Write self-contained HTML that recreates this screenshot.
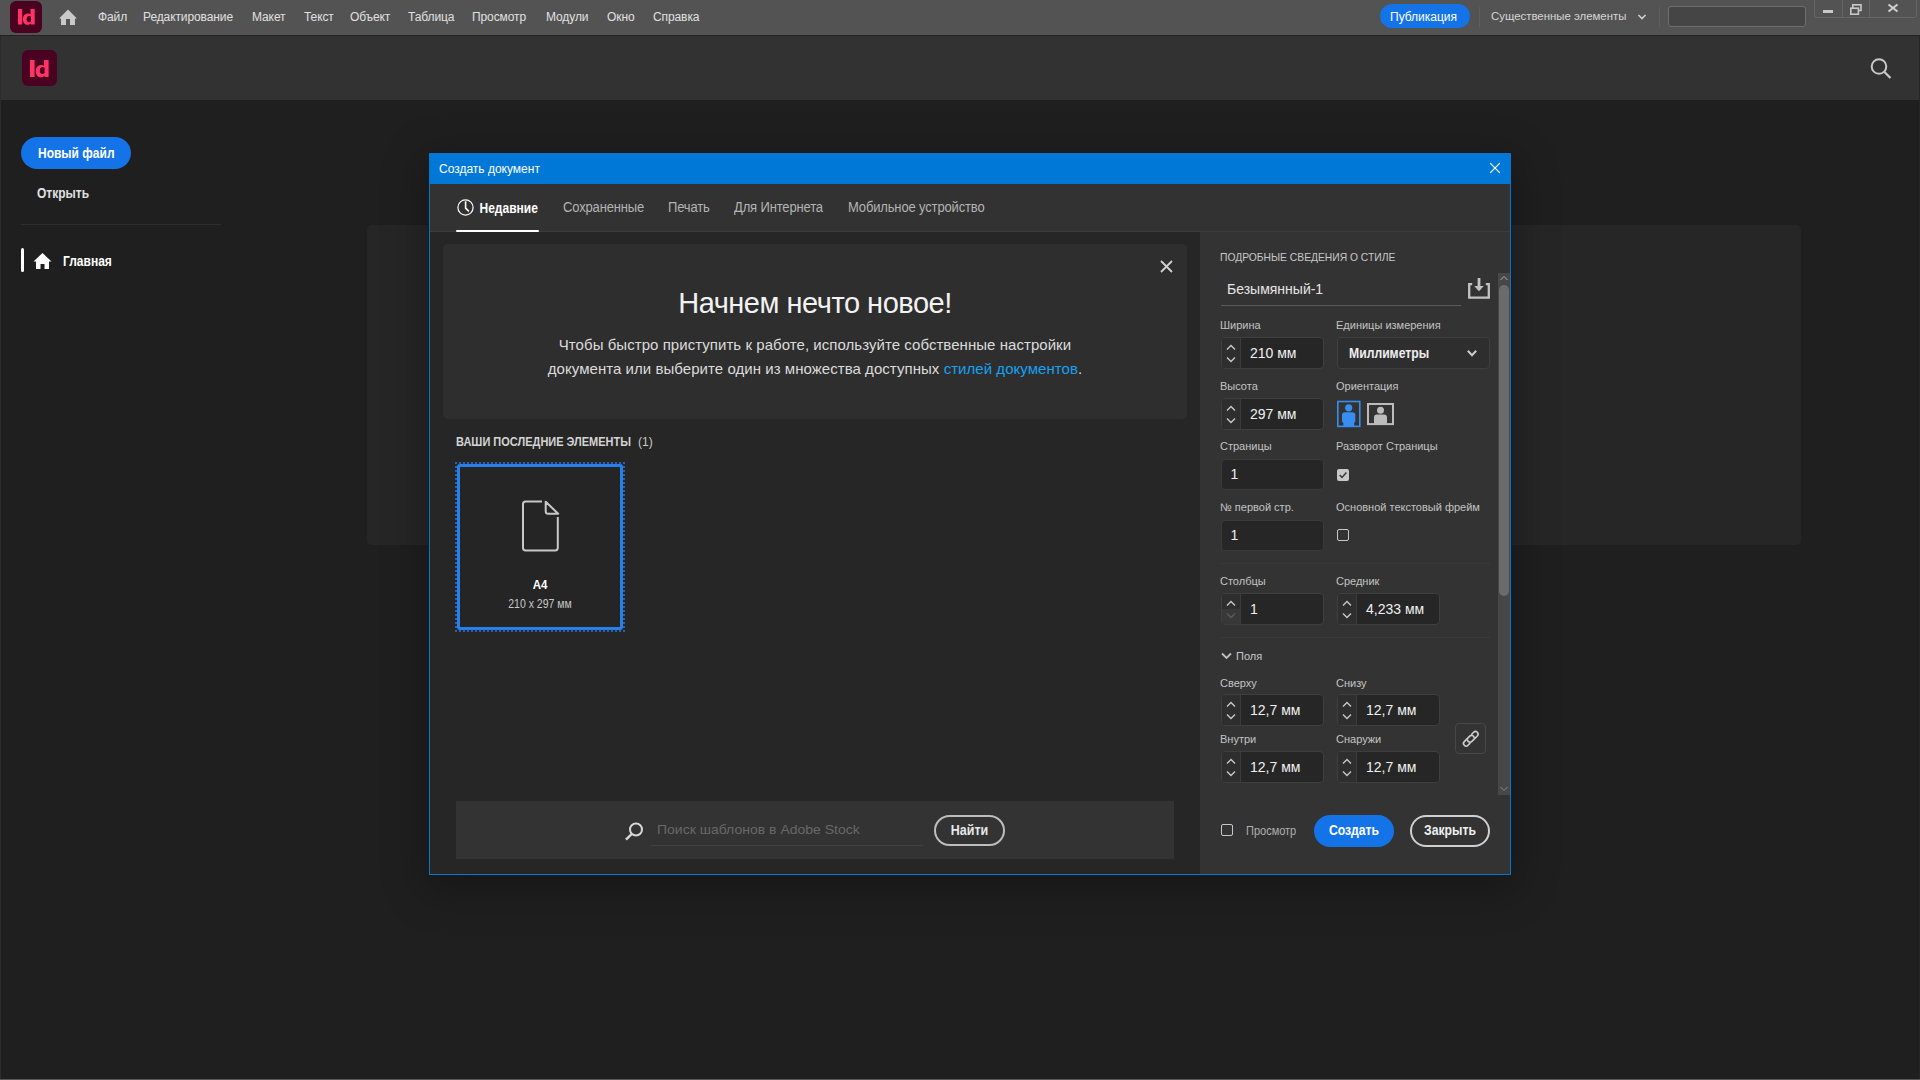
<!DOCTYPE html>
<html><head><meta charset="utf-8"><title>InDesign</title>
<style>
html,body{margin:0;padding:0;}
body{width:1920px;height:1080px;overflow:hidden;position:relative;background:#1f1f1f;font-family:"Liberation Sans", sans-serif;}
.a{position:absolute;display:block;}
.t{position:absolute;white-space:nowrap;line-height:20px;height:20px;}
</style></head><body>
<div class="a" style="left:0px;top:0px;width:1920px;height:35px;background:#535353;"></div>
<div class="a" style="left:0px;top:35px;width:1920px;height:1px;background:#232323;"></div>
<svg class="a" style="left:10px;top:1px;" width="32" height="32" viewBox="0 0 32 32"><rect x="0" y="0" width="32" height="32" rx="6" fill="#49021f"/><rect x="8" y="8" width="4.2" height="15.5" fill="#ff3366"/><path d="M20.5 8 h4.2 v15.5 h-3.7 l-0.2-1.2 c-0.8 1 -1.9 1.5 -3.2 1.5 c-2.9 0 -4.7 -2.3 -4.7 -5.6 c0 -3.4 2 -5.8 5 -5.8 c1.1 0 2 0.3 2.6 0.8 z M21 15.6 c-0.5-0.5 -1.1 -0.7 -1.9 -0.7 c-1.5 0 -2.5 1.2 -2.5 3.3 c0 2 0.9 3.1 2.3 3.1 c0.8 0 1.5 -0.3 2.1 -0.9 z" fill="#ff3366"/></svg>
<svg class="a" style="left:58px;top:9px;" width="20" height="17" viewBox="0 0 20 17"><path d="M10 0.5 L19 9.5 L17 9.5 L17 16 L12 16 L12 10 L8 10 L8 16 L3 16 L3 9.5 L1 9.5 Z" fill="#c9c9c9"/></svg>
<div class="t" style="left:98px;top:6.84px;font-size:12px;color:#e0e0e0;letter-spacing:-0.1px;">Файл</div>
<div class="t" style="left:143px;top:6.84px;font-size:12px;color:#e0e0e0;letter-spacing:-0.1px;">Редактирование</div>
<div class="t" style="left:252px;top:6.84px;font-size:12px;color:#e0e0e0;letter-spacing:-0.1px;">Макет</div>
<div class="t" style="left:304px;top:6.84px;font-size:12px;color:#e0e0e0;letter-spacing:-0.1px;">Текст</div>
<div class="t" style="left:350px;top:6.84px;font-size:12px;color:#e0e0e0;letter-spacing:-0.1px;">Объект</div>
<div class="t" style="left:408px;top:6.84px;font-size:12px;color:#e0e0e0;letter-spacing:-0.1px;">Таблица</div>
<div class="t" style="left:472px;top:6.84px;font-size:12px;color:#e0e0e0;letter-spacing:-0.1px;">Просмотр</div>
<div class="t" style="left:546px;top:6.84px;font-size:12px;color:#e0e0e0;letter-spacing:-0.1px;">Модули</div>
<div class="t" style="left:607px;top:6.84px;font-size:12px;color:#e0e0e0;letter-spacing:-0.1px;">Окно</div>
<div class="t" style="left:653px;top:6.84px;font-size:12px;color:#e0e0e0;letter-spacing:-0.1px;">Справка</div>
<div class="a" style="left:1380px;top:4px;width:90px;height:24px;background:#1473e6;border-radius:12px;"></div>
<div class="t" style="left:1390px;top:6.84px;font-size:12px;color:#ffffff;">Публикация</div>
<div class="a" style="left:1479px;top:7px;width:1px;height:20px;background:#5e5e5e;"></div>
<div class="t" style="left:1491px;top:6.35px;font-size:11.4px;color:#d6d6d6;">Существенные элементы</div>
<svg class="a" style="left:1637px;top:13px;" width="10" height="8" viewBox="0 0 10 8"><path d="M1.5 2 L5 5.5 L8.5 2" stroke="#d0d0d0" stroke-width="1.6" fill="none"/></svg>
<div class="a" style="left:1659px;top:7px;width:1px;height:20px;background:#5e5e5e;"></div>
<div class="a" style="left:1668px;top:6px;width:138px;height:21px;background:#454545;border:1px solid #6e6e6e;border-radius:3px;box-sizing:border-box;"></div>
<div class="a" style="left:1814px;top:-3px;width:103px;height:21px;background:transparent;border:1px solid #666;border-radius:3px;box-sizing:border-box;"></div>
<div class="a" style="left:1842px;top:0px;width:1px;height:17px;background:#666;"></div>
<div class="a" style="left:1869px;top:0px;width:1px;height:17px;background:#666;"></div>
<div class="a" style="left:1823px;top:10px;width:10px;height:3px;background:#c8c8c8;"></div>
<svg class="a" style="left:1849px;top:3px;" width="14" height="12" viewBox="0 0 14 12"><rect x="3.8" y="1.8" width="8.2" height="5.6" stroke="#c8c8c8" stroke-width="1.6" fill="none"/><rect x="1.8" y="5.2" width="7.6" height="6" stroke="#c8c8c8" stroke-width="1.6" fill="#535353"/></svg>
<svg class="a" style="left:1887px;top:3px;" width="12" height="10" viewBox="0 0 12 10"><path d="M1.5 1.5 L10.5 8.5 M10.5 1.5 L1.5 8.5" stroke="#d0d0d0" stroke-width="2"/></svg>
<div class="a" style="left:0px;top:36px;width:1920px;height:64px;background:#323232;"></div>
<svg class="a" style="left:22px;top:50px;" width="35" height="36" viewBox="0 0 35 36"><rect x="0" y="0" width="35" height="36" rx="6" fill="#49021f"/><rect x="8" y="10" width="4.6" height="17" fill="#ff3366"/><path d="M22 10 h4.6 v17 h-4 l-0.25-1.3 c-0.9 1.1 -2.1 1.6 -3.5 1.6 c-3.2 0 -5.1 -2.5 -5.1 -6.1 c0 -3.7 2.2 -6.3 5.5 -6.3 c1.2 0 2.2 0.3 2.8 0.9 z M22.6 17.7 c-0.6-0.55 -1.2 -0.8 -2.1 -0.8 c-1.6 0 -2.7 1.3 -2.7 3.6 c0 2.2 1 3.4 2.5 3.4 c0.9 0 1.65 -0.35 2.3 -1 z" fill="#ff3366"/></svg>
<svg class="a" style="left:1869px;top:57px;" width="24" height="24" viewBox="0 0 24 24"><circle cx="10" cy="9.5" r="7.3" stroke="#c8c8c8" stroke-width="2" fill="none"/><path d="M15.2 14.7 L21.5 21" stroke="#c8c8c8" stroke-width="2.2"/></svg>
<div class="a" style="left:0px;top:36px;width:1px;height:1044px;background:#2b2b2b;"></div>
<div class="a" style="left:1919px;top:36px;width:1px;height:1044px;background:#262626;"></div>
<div class="a" style="left:0px;top:1079px;width:1920px;height:1px;background:#585858;"></div>
<div class="a" style="left:21px;top:137px;width:110px;height:32px;background:#1473e6;border-radius:16px;"></div>
<div class="t" style="left:38px;top:143.84px;font-size:12px;color:#ffffff;font-weight:bold;transform:scaleY(1.24);transform-origin:50% 14.16px;">Новый файл</div>
<div class="t" style="left:37px;top:183.84px;font-size:12px;color:#e0e0e0;font-weight:bold;transform:scaleY(1.2);transform-origin:50% 14.16px;">Открыть</div>
<div class="a" style="left:21px;top:224px;width:200px;height:1px;background:#2e2e2e;"></div>
<div class="a" style="left:21px;top:248px;width:3px;height:24px;background:#ffffff;border-radius:2px;"></div>
<svg class="a" style="left:33px;top:252px;" width="19" height="18" viewBox="0 0 19 18"><path d="M9.5 1 L18.5 9.5 L16 9.5 L16 17 L11.5 17 L11.5 12 L7.5 12 L7.5 17 L3 17 L3 9.5 L0.5 9.5 Z" fill="#ffffff"/></svg>
<div class="t" style="left:63px;top:251.84px;font-size:12px;color:#ffffff;font-weight:bold;transform:scaleY(1.24);transform-origin:50% 14.16px;">Главная</div>
<div class="a" style="left:367px;top:225px;width:1434px;height:320px;background:#262626;border-radius:5px;"></div>
<div class="a" style="left:428px;top:152px;width:1084px;height:724px;background:#1a1612;box-shadow:0 10px 40px 4px rgba(0,0,0,0.28);"></div>
<div class="a" style="left:429px;top:153px;width:1082px;height:722px;background:#0078d7;"></div>
<div class="a" style="left:430px;top:184px;width:1080px;height:690px;background:#262626;"></div>
<div class="a" style="left:430px;top:184px;width:1080px;height:47px;background:#323232;"></div>
<div class="a" style="left:430px;top:231px;width:1080px;height:1px;background:#3d3d3d;"></div>
<div class="t" style="left:439px;top:158.84px;font-size:12px;color:#ffffff;">Создать документ</div>
<svg class="a" style="left:1489px;top:162px;" width="12" height="12" viewBox="0 0 12 12"><path d="M1.2 1.2 L10.8 10.8 M10.8 1.2 L1.2 10.8" stroke="#ffffff" stroke-width="1.15"/></svg>
<svg class="a" style="left:457px;top:199px;" width="17" height="17" viewBox="0 0 17 17"><circle cx="8.5" cy="8.5" r="7.6" stroke="#ffffff" stroke-width="1.2" fill="none"/><path d="M8.6 2.2 L8.6 9.2 L11.9 12.3" stroke="#ffffff" stroke-width="1.6" fill="none"/></svg>
<div class="t" style="left:479.5px;top:198.84px;font-size:12px;color:#ffffff;font-weight:bold;transform:scaleY(1.25);transform-origin:50% 14.16px;">Недавние</div>
<div class="a" style="left:456px;top:230px;width:83px;height:2px;background:#ffffff;border-radius:1px;"></div>
<div class="t" style="left:563px;top:198.49px;font-size:13px;color:#b4b4b4;letter-spacing:-0.15px;transform:scaleY(1.18);transform-origin:50% 14.51px;">Сохраненные</div>
<div class="t" style="left:668px;top:198.49px;font-size:13px;color:#b4b4b4;letter-spacing:-0.15px;transform:scaleY(1.18);transform-origin:50% 14.51px;">Печать</div>
<div class="t" style="left:734px;top:198.49px;font-size:13px;color:#b4b4b4;letter-spacing:-0.15px;transform:scaleY(1.18);transform-origin:50% 14.51px;">Для Интернета</div>
<div class="t" style="left:848px;top:198.49px;font-size:13px;color:#b4b4b4;letter-spacing:-0.15px;transform:scaleY(1.18);transform-origin:50% 14.51px;">Мобильное устройство</div>
<div class="a" style="left:443px;top:244px;width:744px;height:175px;background:#2e2e2e;border-radius:5px;"></div>
<svg class="a" style="left:1160px;top:260px;" width="13" height="13" viewBox="0 0 13 13"><path d="M1 1 L12 12 M12 1 L1 12" stroke="#d0d0d0" stroke-width="1.8"/></svg>
<div class="t" style="left:315.00px;width:1000px;text-align:center;top:293.15px;font-size:29px;color:#f2f2f2;letter-spacing:-0.48px;">Начнем нечто новое!</div>
<div class="t" style="left:315.00px;width:1000px;text-align:center;top:334.80px;font-size:15px;color:#dcdcdc;letter-spacing:0.05px;">Чтобы быстро приступить к работе, используйте собственные настройки</div>
<div class="t" style="left:315.00px;width:1000px;text-align:center;top:358.80px;font-size:15px;color:#dcdcdc;letter-spacing:0.05px;">документа или выберите один из множества доступных <span style="color:#17a0f2">стилей документов</span>.</div>
<div class="t" style="left:456px;top:432.19px;font-size:11px;color:#d4d4d4;font-weight:bold;transform:scaleY(1.15);transform-origin:50% 13.81px;">ВАШИ ПОСЛЕДНИЕ ЭЛЕМЕНТЫ</div>
<div class="t" style="left:638px;top:431.84px;font-size:12px;color:#c8c8c8;">(1)</div>
<div class="a" style="left:455px;top:462px;width:170px;height:170px;background:transparent;border:2px dotted #2b62b0;box-sizing:border-box;"></div>
<div class="a" style="left:457px;top:464px;width:166px;height:166px;background:#252525;border:3px solid #2680eb;border-radius:3px;box-sizing:border-box;"></div>
<svg class="a" style="left:521px;top:499px;" width="40" height="55" viewBox="0 0 40 55"><g stroke="#c8c8c8" stroke-width="2" fill="none" stroke-linejoin="round"><path d="M21 2.6 H4.6 Q2 2.6 2 5.2 V48.8 Q2 51.4 4.6 51.4 H34.2 Q36.8 51.4 36.8 48.8 V18.1"/><path d="M24.7 2.8 V12.2 Q24.7 14.7 27.2 14.7 H37.2 Z"/></g></svg>
<div class="t" style="left:460.00px;width:160px;text-align:center;top:575.31px;font-size:11.5px;color:#ffffff;font-weight:bold;transform:scaleY(1.12);transform-origin:50% 13.99px;">A4</div>
<div class="t" style="left:460.00px;width:160px;text-align:center;top:593.66px;font-size:10.5px;color:#c8c8c8;transform:scaleY(1.2);transform-origin:50% 13.64px;">210 x 297 мм</div>
<div class="a" style="left:456px;top:801px;width:718px;height:58px;background:#333333;"></div>
<svg class="a" style="left:624px;top:821px;" width="21" height="21" viewBox="0 0 21 21"><circle cx="12" cy="8.5" r="6" stroke="#d8d8d8" stroke-width="2" fill="none"/><path d="M7.8 12.8 L2 18.6" stroke="#d8d8d8" stroke-width="2.4"/></svg>
<div class="t" style="left:657px;top:819.15px;font-size:14px;color:#686868;transform:scaleY(0.97);transform-origin:50% 14.85px;">Поиск шаблонов в Adobe Stock</div>
<div class="a" style="left:651px;top:845px;width:272px;height:1px;background:#404040;"></div>
<div class="a" style="left:934px;top:815px;width:71px;height:31px;background:transparent;border:2px solid #bdbdbd;border-radius:16px;box-sizing:border-box;"></div>
<div class="t" style="left:934.50px;width:70px;text-align:center;top:820.67px;font-size:12.5px;color:#e8e8e8;font-weight:bold;transform:scaleY(1.18);transform-origin:50% 14.33px;">Найти</div>
<div class="a" style="left:1200px;top:232px;width:310px;height:642px;background:#333333;"></div>
<div class="t" style="left:1220px;top:248.43px;font-size:10.3px;color:#c8c8c8;">ПОДРОБНЫЕ СВЕДЕНИЯ О СТИЛЕ</div>
<div class="t" style="left:1227px;top:279.15px;font-size:14px;color:#e6e6e6;">Безымянный-1</div>
<div class="a" style="left:1221px;top:305px;width:240px;height:1px;background:#5a5a5a;"></div>
<svg class="a" style="left:1467px;top:276px;" width="24" height="24" viewBox="0 0 24 24"><path d="M5.2 8.2 H2.2 V21.6 H21.8 V8.2 H18.8" stroke="#c2c2c2" stroke-width="2.3" fill="none"/><path d="M12 2 V14" stroke="#c2c2c2" stroke-width="2.8"/><path d="M7.2 10 L12 15.3 L16.8 10 Z" fill="#c2c2c2"/></svg>
<div class="a" style="left:1498px;top:273px;width:12px;height:522px;background:#474747;"></div>
<div class="a" style="left:1499px;top:285px;width:10px;height:311px;background:#6b6b6b;border-radius:5px;"></div>
<svg class="a" style="left:1499px;top:275px;" width="10" height="7" viewBox="0 0 10 7"><path d="M1.5 5 L5 1.5 L8.5 5" stroke="#aaaaaa" stroke-width="1" fill="none"/></svg>
<svg class="a" style="left:1499px;top:785px;" width="10" height="7" viewBox="0 0 10 7"><path d="M1.5 2 L5 5.5 L8.5 2" stroke="#8a8a8a" stroke-width="1" fill="none"/></svg>
<div class="t" style="left:1220px;top:315.19px;font-size:11px;color:#c3c3c3;">Ширина</div>
<div class="t" style="left:1336px;top:315.19px;font-size:11px;color:#c3c3c3;">Единицы измерения</div>
<div class="a" style="left:1221px;top:337px;width:103px;height:32px;background:#262626;border:1px solid #3f3f3f;border-radius:4px;box-sizing:border-box;"></div>
<div class="a" style="left:1222px;top:338px;width:19px;height:30px;background:#2e2e2e;border-radius:3px 0 0 3px;"></div>
<div class="a" style="left:1240px;top:338px;width:1px;height:30px;background:#3c3c3c;"></div>
<svg class="a" style="left:1226px;top:344px;" width="10" height="7" viewBox="0 0 10 7"><path d="M1 5.5 L5 1.5 L9 5.5" stroke="#c8c8c8" stroke-width="1.4" fill="none"/></svg>
<svg class="a" style="left:1226px;top:356px;" width="10" height="7" viewBox="0 0 10 7"><path d="M1 1.5 L5 5.5 L9 1.5" stroke="#c8c8c8" stroke-width="1.4" fill="none"/></svg>
<div class="t" style="left:1250px;top:343.15px;font-size:14px;color:#f0f0f0;">210 мм</div>
<div class="a" style="left:1337px;top:337px;width:153px;height:32px;background:#2e2e2e;border:1px solid #3f3f3f;border-radius:4px;box-sizing:border-box;"></div>
<div class="t" style="left:1349px;top:344.47px;font-size:12.2px;color:#eeeeee;font-weight:bold;transform:scaleY(1.22);transform-origin:50% 14.23px;">Миллиметры</div>
<svg class="a" style="left:1466px;top:349px;" width="12" height="9" viewBox="0 0 12 9"><path d="M1.8 1.8 L6 6.2 L10.2 1.8" stroke="#cccccc" stroke-width="2" fill="none"/></svg>
<div class="t" style="left:1220px;top:376.19px;font-size:11px;color:#c3c3c3;">Высота</div>
<div class="t" style="left:1336px;top:376.19px;font-size:11px;color:#c3c3c3;">Ориентация</div>
<div class="a" style="left:1221px;top:398px;width:103px;height:32px;background:#262626;border:1px solid #3f3f3f;border-radius:4px;box-sizing:border-box;"></div>
<div class="a" style="left:1222px;top:399px;width:19px;height:30px;background:#2e2e2e;border-radius:3px 0 0 3px;"></div>
<div class="a" style="left:1240px;top:399px;width:1px;height:30px;background:#3c3c3c;"></div>
<svg class="a" style="left:1226px;top:405px;" width="10" height="7" viewBox="0 0 10 7"><path d="M1 5.5 L5 1.5 L9 5.5" stroke="#c8c8c8" stroke-width="1.4" fill="none"/></svg>
<svg class="a" style="left:1226px;top:417px;" width="10" height="7" viewBox="0 0 10 7"><path d="M1 1.5 L5 5.5 L9 1.5" stroke="#c8c8c8" stroke-width="1.4" fill="none"/></svg>
<div class="t" style="left:1250px;top:404.15px;font-size:14px;color:#f0f0f0;">297 мм</div>
<svg class="a" style="left:1337px;top:400px;" width="24" height="28" viewBox="0 0 24 28"><rect x="0.8" y="1.5" width="22" height="24.9" stroke="#378ef0" stroke-width="1.6" fill="none"/><circle cx="11.7" cy="7.8" r="3.6" fill="#378ef0"/><path d="M5 15 Q5 12.2 8 12.2 H15.3 Q18.3 12.2 18.3 15 V22 L17.2 22.5 V26 H6.3 V22.5 L5 22 Z" fill="#378ef0"/></svg>
<svg class="a" style="left:1367px;top:403px;" width="28" height="23" viewBox="0 0 28 23"><rect x="1" y="1" width="25" height="20.1" stroke="#bcbcbc" stroke-width="2" fill="none"/><circle cx="13.5" cy="7.2" r="3.5" fill="#bcbcbc"/><path d="M7 14.6 Q7 11.6 10 11.6 H17 Q20 11.6 20 14.6 V21 H7 Z" fill="#bcbcbc"/></svg>
<div class="t" style="left:1220px;top:436.19px;font-size:11px;color:#c3c3c3;">Страницы</div>
<div class="t" style="left:1336px;top:436.19px;font-size:11px;color:#c3c3c3;">Разворот Страницы</div>
<div class="a" style="left:1221px;top:459px;width:103px;height:31px;background:#262626;border:1px solid #3a3a3a;border-radius:4px;box-sizing:border-box;"></div>
<div class="t" style="left:1230.5px;top:464.15px;font-size:14px;color:#f0f0f0;">1</div>
<div class="a" style="left:1337px;top:469px;width:12px;height:12px;background:#c8c8c8;border-radius:2px;"></div>
<svg class="a" style="left:1337px;top:469px;" width="12" height="12" viewBox="0 0 12 12"><path d="M2.6 6 L5 8.4 L9.4 3.4" stroke="#3c3c3c" stroke-width="1.5" fill="none"/></svg>
<div class="t" style="left:1220px;top:497.19px;font-size:11px;color:#c3c3c3;">№ первой стр.</div>
<div class="t" style="left:1336px;top:497.19px;font-size:11px;color:#c3c3c3;">Основной текстовый фрейм</div>
<div class="a" style="left:1221px;top:520px;width:103px;height:31px;background:#262626;border:1px solid #3a3a3a;border-radius:4px;box-sizing:border-box;"></div>
<div class="t" style="left:1230.5px;top:525.15px;font-size:14px;color:#f0f0f0;">1</div>
<div class="a" style="left:1337px;top:529px;width:12px;height:12px;background:transparent;border:1.5px solid #c8c8c8;border-radius:2px;box-sizing:border-box;"></div>
<div class="a" style="left:1221px;top:563px;width:269px;height:1px;background:#3a3a3a;"></div>
<div class="t" style="left:1220px;top:571.19px;font-size:11px;color:#c3c3c3;">Столбцы</div>
<div class="t" style="left:1336px;top:571.19px;font-size:11px;color:#c3c3c3;">Средник</div>
<div class="a" style="left:1221px;top:593px;width:103px;height:32px;background:#262626;border:1px solid #3f3f3f;border-radius:4px;box-sizing:border-box;"></div>
<div class="a" style="left:1222px;top:594px;width:19px;height:30px;background:#2e2e2e;border-radius:3px 0 0 3px;"></div>
<div class="a" style="left:1222px;top:609px;width:19px;height:15px;background:#383838;border-radius:0 0 0 3px;"></div>
<div class="a" style="left:1240px;top:594px;width:1px;height:30px;background:#3c3c3c;"></div>
<svg class="a" style="left:1226px;top:600px;" width="10" height="7" viewBox="0 0 10 7"><path d="M1 5.5 L5 1.5 L9 5.5" stroke="#c8c8c8" stroke-width="1.4" fill="none"/></svg>
<svg class="a" style="left:1226px;top:612px;" width="10" height="7" viewBox="0 0 10 7"><path d="M1 1.5 L5 5.5 L9 1.5" stroke="#5a5a5a" stroke-width="1.4" fill="none"/></svg>
<div class="t" style="left:1250px;top:599.15px;font-size:14px;color:#f0f0f0;">1</div>
<div class="a" style="left:1337px;top:593px;width:103px;height:32px;background:#262626;border:1px solid #3f3f3f;border-radius:4px;box-sizing:border-box;"></div>
<div class="a" style="left:1338px;top:594px;width:19px;height:30px;background:#2e2e2e;border-radius:3px 0 0 3px;"></div>
<div class="a" style="left:1356px;top:594px;width:1px;height:30px;background:#3c3c3c;"></div>
<svg class="a" style="left:1342px;top:600px;" width="10" height="7" viewBox="0 0 10 7"><path d="M1 5.5 L5 1.5 L9 5.5" stroke="#c8c8c8" stroke-width="1.4" fill="none"/></svg>
<svg class="a" style="left:1342px;top:612px;" width="10" height="7" viewBox="0 0 10 7"><path d="M1 1.5 L5 5.5 L9 1.5" stroke="#c8c8c8" stroke-width="1.4" fill="none"/></svg>
<div class="t" style="left:1366px;top:599.15px;font-size:14px;color:#f0f0f0;">4,233 мм</div>
<div class="a" style="left:1221px;top:637px;width:269px;height:1px;background:#3a3a3a;"></div>
<svg class="a" style="left:1221px;top:652px;" width="11" height="8" viewBox="0 0 11 8"><path d="M1 1.5 L5.5 6 L10 1.5" stroke="#bfbfbf" stroke-width="1.8" fill="none"/></svg>
<div class="t" style="left:1236px;top:646.19px;font-size:11px;color:#c8c8c8;">Поля</div>
<div class="t" style="left:1220px;top:673.19px;font-size:11px;color:#c3c3c3;">Сверху</div>
<div class="t" style="left:1336px;top:673.19px;font-size:11px;color:#c3c3c3;">Снизу</div>
<div class="a" style="left:1221px;top:694px;width:103px;height:32px;background:#262626;border:1px solid #3f3f3f;border-radius:4px;box-sizing:border-box;"></div>
<div class="a" style="left:1222px;top:695px;width:19px;height:30px;background:#2e2e2e;border-radius:3px 0 0 3px;"></div>
<div class="a" style="left:1240px;top:695px;width:1px;height:30px;background:#3c3c3c;"></div>
<svg class="a" style="left:1226px;top:701px;" width="10" height="7" viewBox="0 0 10 7"><path d="M1 5.5 L5 1.5 L9 5.5" stroke="#c8c8c8" stroke-width="1.4" fill="none"/></svg>
<svg class="a" style="left:1226px;top:713px;" width="10" height="7" viewBox="0 0 10 7"><path d="M1 1.5 L5 5.5 L9 1.5" stroke="#c8c8c8" stroke-width="1.4" fill="none"/></svg>
<div class="t" style="left:1250px;top:700.15px;font-size:14px;color:#f0f0f0;">12,7 мм</div>
<div class="a" style="left:1337px;top:694px;width:103px;height:32px;background:#262626;border:1px solid #3f3f3f;border-radius:4px;box-sizing:border-box;"></div>
<div class="a" style="left:1338px;top:695px;width:19px;height:30px;background:#2e2e2e;border-radius:3px 0 0 3px;"></div>
<div class="a" style="left:1356px;top:695px;width:1px;height:30px;background:#3c3c3c;"></div>
<svg class="a" style="left:1342px;top:701px;" width="10" height="7" viewBox="0 0 10 7"><path d="M1 5.5 L5 1.5 L9 5.5" stroke="#c8c8c8" stroke-width="1.4" fill="none"/></svg>
<svg class="a" style="left:1342px;top:713px;" width="10" height="7" viewBox="0 0 10 7"><path d="M1 1.5 L5 5.5 L9 1.5" stroke="#c8c8c8" stroke-width="1.4" fill="none"/></svg>
<div class="t" style="left:1366px;top:700.15px;font-size:14px;color:#f0f0f0;">12,7 мм</div>
<div class="t" style="left:1220px;top:729.19px;font-size:11px;color:#c3c3c3;">Внутри</div>
<div class="t" style="left:1336px;top:729.19px;font-size:11px;color:#c3c3c3;">Снаружи</div>
<div class="a" style="left:1221px;top:751px;width:103px;height:32px;background:#262626;border:1px solid #3f3f3f;border-radius:4px;box-sizing:border-box;"></div>
<div class="a" style="left:1222px;top:752px;width:19px;height:30px;background:#2e2e2e;border-radius:3px 0 0 3px;"></div>
<div class="a" style="left:1240px;top:752px;width:1px;height:30px;background:#3c3c3c;"></div>
<svg class="a" style="left:1226px;top:758px;" width="10" height="7" viewBox="0 0 10 7"><path d="M1 5.5 L5 1.5 L9 5.5" stroke="#c8c8c8" stroke-width="1.4" fill="none"/></svg>
<svg class="a" style="left:1226px;top:770px;" width="10" height="7" viewBox="0 0 10 7"><path d="M1 1.5 L5 5.5 L9 1.5" stroke="#c8c8c8" stroke-width="1.4" fill="none"/></svg>
<div class="t" style="left:1250px;top:757.15px;font-size:14px;color:#f0f0f0;">12,7 мм</div>
<div class="a" style="left:1337px;top:751px;width:103px;height:32px;background:#262626;border:1px solid #3f3f3f;border-radius:4px;box-sizing:border-box;"></div>
<div class="a" style="left:1338px;top:752px;width:19px;height:30px;background:#2e2e2e;border-radius:3px 0 0 3px;"></div>
<div class="a" style="left:1356px;top:752px;width:1px;height:30px;background:#3c3c3c;"></div>
<svg class="a" style="left:1342px;top:758px;" width="10" height="7" viewBox="0 0 10 7"><path d="M1 5.5 L5 1.5 L9 5.5" stroke="#c8c8c8" stroke-width="1.4" fill="none"/></svg>
<svg class="a" style="left:1342px;top:770px;" width="10" height="7" viewBox="0 0 10 7"><path d="M1 1.5 L5 5.5 L9 1.5" stroke="#c8c8c8" stroke-width="1.4" fill="none"/></svg>
<div class="t" style="left:1366px;top:757.15px;font-size:14px;color:#f0f0f0;">12,7 мм</div>
<div class="a" style="left:1455px;top:723px;width:31px;height:31px;background:transparent;border:1px solid #474747;border-radius:4px;box-sizing:border-box;"></div>
<svg class="a" style="left:1458px;top:726px;" width="26" height="26" viewBox="0 0 26 26"><g transform="translate(12.8 12.8) rotate(-45)" stroke="#cfcfcf" stroke-width="1.6" fill="none" stroke-linecap="round"><path d="M3.9 -2.6 L6.6 -2.6 A2.6 2.6 0 0 1 6.6 2.6 L-1.1 2.6 A2.6 2.6 0 0 1 -3.2 -1.5"/><path d="M-3.9 2.6 L-6.6 2.6 A2.6 2.6 0 0 1 -6.6 -2.6 L1.1 -2.6 A2.6 2.6 0 0 1 3.2 1.5"/></g></svg>
<div class="a" style="left:1221px;top:824px;width:12px;height:12px;background:transparent;border:1.5px solid #c8c8c8;border-radius:2px;box-sizing:border-box;"></div>
<div class="t" style="left:1246px;top:820.99px;font-size:11px;color:#b0b0b0;transform:scaleY(1.08);transform-origin:50% 13.81px;">Просмотр</div>
<div class="a" style="left:1314px;top:815px;width:80px;height:32px;background:#1473e6;border-radius:16px;"></div>
<div class="t" style="left:1314.00px;width:80px;text-align:center;top:821.47px;font-size:12.2px;color:#ffffff;font-weight:bold;transform:scaleY(1.22);transform-origin:50% 14.23px;">Создать</div>
<div class="a" style="left:1410px;top:815px;width:80px;height:32px;background:transparent;border:2px solid #d0d0d0;border-radius:16px;box-sizing:border-box;"></div>
<div class="t" style="left:1410.00px;width:80px;text-align:center;top:821.47px;font-size:12.2px;color:#f0f0f0;font-weight:bold;transform:scaleY(1.22);transform-origin:50% 14.23px;">Закрыть</div>
</body></html>
